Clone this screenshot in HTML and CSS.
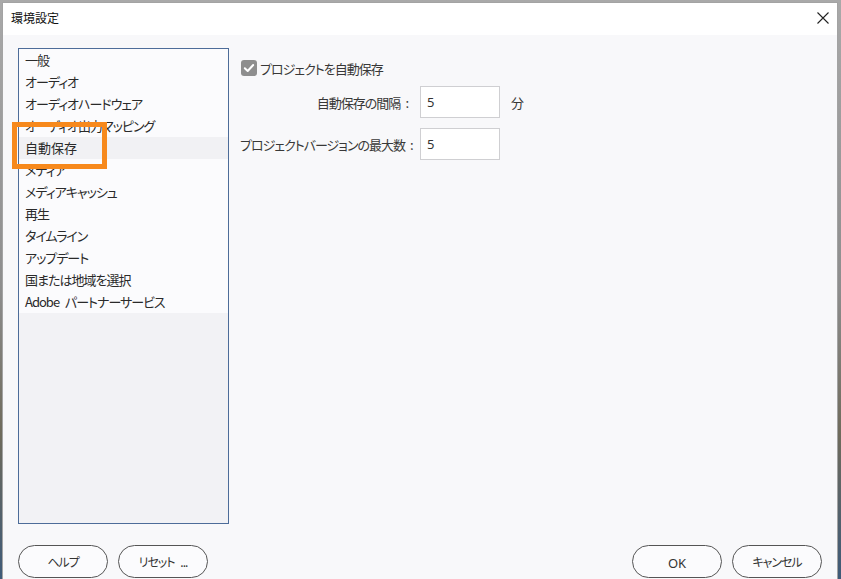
FILE: index.html
```html
<!DOCTYPE html>
<html lang="ja">
<head>
    <meta charset="UTF-8">
    <meta name="viewport" content="width=device-width, initial-scale=1.0">
    <title>環境設定</title>
    <link rel="stylesheet" href="styles.css">
</head>
<body>
    <div class="window">
        <div class="titlebar">
            <span class="title">環境設定</span>
            <svg class="close" width="12" height="12" viewBox="0 0 12 12">
                <path d="M0.5 0.5 L11.5 11.5 M11.5 0.5 L0.5 11.5" stroke="#222" stroke-width="1.1" fill="none"/>
            </svg>
        </div>
        <div class="content">
            <div class="main">
                <div class="listBox">
                    <ul class="list">
                        <li>一般</li>
                        <li>オーディオ</li>
                        <li>オーディオハードウェア</li>
                        <li>オーディオ出力マッピング</li>
                        <li class="selected">自動保存</li>
                        <li>メディア</li>
                        <li>メディアキャッシュ</li>
                        <li>再生</li>
                        <li>タイムライン</li>
                        <li>アップデート</li>
                        <li>国または地域を選択</li>
                        <li>Adobe パートナーサービス</li>
                    </ul>
                    <div class="highlight"></div>
                </div>
                <div class="panel">
                    <label class="checkRow">
                        <span class="checkbox">
                            <svg width="16" height="16" viewBox="0 0 16 16">
                                <path d="M3.8 8.2 L6.7 11 L12.2 5" stroke="#fff" stroke-width="2" fill="none" stroke-linecap="round" stroke-linejoin="round"/>
                            </svg>
                        </span>
                        プロジェクトを自動保存
                    </label>
                    <div class="formGrid">
                        <span class="fieldLabel">自動保存の間隔<span class="colon">:</span></span>
                        <div class="field">5</div>
                        <span class="unit">分</span>
                        <span class="fieldLabel">プロジェクトバージョンの最大数<span class="colon">:</span></span>
                        <div class="field">5</div>
                        <span class="unit"></span>
                    </div>
                </div>
            </div>
            <div class="footer">
                <div class="btnGroup">
                    <button class="btn">ヘルプ</button>
                    <button class="btn">リセット ...</button>
                </div>
                <div class="btnGroup">
                    <button class="btn btnOk">OK</button>
                    <button class="btn">キャンセル</button>
                </div>
            </div>
        </div>
    </div>
</body>
</html>
```

FILE: styles.css
```css
html, body {
    height: 100%;
}
body {
    margin: 0;
    background: linear-gradient(to bottom, #a9a9a9 0%, #8d8d8d 50%, #6f6b5c 75%, #3e5a78 100%);
    font-family: "Noto Sans CJK JP", sans-serif;
    font-feature-settings: "palt";
    color: #222;
    overflow: hidden;
}
.window {
    margin: 2px 3px 0 2px;
    height: calc(100% - 2px);
    box-sizing: border-box;
    border: 1px solid #a3a3a3;
    border-bottom: none;
    background-color: #f8f8fa;
    display: flex;
    flex-direction: column;
}
.titlebar {
    height: 32px;
    background-color: #ffffff;
    display: flex;
    align-items: center;
    justify-content: space-between;
    padding: 0 8px 0 8px;
    flex-shrink: 0;
}
.title {
    font-size: 12px;
    color: #111;
    margin-top: -3px;
}
.close {
    margin-top: -2px;
}
.content {
    padding: 13px 15px 0 15px;
    display: flex;
    flex-direction: column;
}
.main {
    display: flex;
    gap: 11px;
}
.listBox {
    position: relative;
    width: 209px;
    height: 474px;
    border: 1px solid #4d6c99;
    background-color: #f2f2f5;
}
.list {
    list-style: none;
    margin: 0;
    padding: 0;
}
.list li {
    height: 22px;
    line-height: 22px;
    padding-left: 6px;
    font-size: 13px;
    letter-spacing: -1px;
    word-spacing: 4px;
    color: #2a2a2a;
    background-color: #fbfbfd;
    white-space: nowrap;
}
.list li.selected {
    background-color: #f1f1f4;
    letter-spacing: 0;
}
.highlight {
    position: absolute;
    left: -7px;
    top: 73px;
    width: 95px;
    height: 47px;
    box-sizing: border-box;
    border: 5px solid #f7891c;
}
.panel {
    padding-top: 12px;
    display: flex;
    flex-direction: column;
}
.checkRow {
    display: flex;
    align-items: center;
    gap: 3px;
    font-size: 13px;
    letter-spacing: -1px;
    color: #383838;
    margin-left: 1px;
    height: 16px;
}
.checkbox {
    width: 16px;
    height: 16px;
    border-radius: 3px;
    background-color: #8e8e8e;
    display: flex;
}
.formGrid {
    margin-top: 10px;
    display: grid;
    grid-template-columns: 170px 80px auto;
    column-gap: 10px;
    row-gap: 10px;
    align-items: center;
}
.fieldLabel {
    text-align: right;
    font-size: 13px;
    letter-spacing: -1px;
    color: #383838;
    white-space: nowrap;
}
.colon {
    margin-left: 5px;
    margin-right: 1px;
    letter-spacing: 0;
}
.field {
    height: 30px;
    line-height: 30px;
    border: 1px solid #cfcfd2;
    background-color: #ffffff;
    padding-left: 6px;
    font-family: "Noto Sans", sans-serif;
    font-size: 13px;
    color: #333;
}
.unit {
    font-size: 13px;
    color: #383838;
    margin-left: 1px;
}
.footer {
    margin-top: 21px;
    display: flex;
    justify-content: space-between;
}
.btnGroup {
    display: flex;
    gap: 10px;
}
.btn {
    width: 90px;
    height: 33px;
    border: 1px solid #555;
    border-radius: 17px;
    background-color: #fbfbfd;
    font-family: "Noto Sans CJK JP", sans-serif;
    font-feature-settings: "palt";
    font-size: 12px;
    letter-spacing: -1px;
    word-spacing: 4px;
    color: #333;
    padding: 0;
}
.btnOk {
    font-family: "Noto Sans", sans-serif;
    font-size: 13px;
    letter-spacing: 0;
    padding-top: 3px;
}
```
